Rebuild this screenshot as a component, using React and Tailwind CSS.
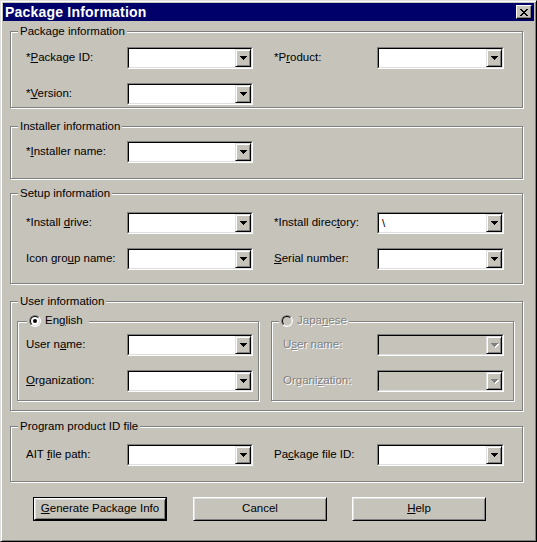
// Win95-style "Package Information" dialog.

const ARROW = 'M0 0h7v1H0z M1 1h5v1H1z M2 2h3v1H2z M3 3h1v1H3z'
const CROSS =
  'M0 0h2v1H0z M6 0h2v1H6z M1 1h2v1H1z M5 1h2v1H5z M2 2h4v1H2z M3 3h2v1H3z M2 4h4v1H2z M1 5h2v1H1z M5 5h2v1H5z M0 6h2v1H0z M6 6h2v1H6z'

function Combo({ w, value, disabled }) {
  return (
    <div className={`${w} h-[22px] border border-t-[#808080] border-l-[#808080] border-b-white border-r-white`}>
      <div
        className={`flex h-full border border-t-black border-l-black border-b-[#dfdfdf] border-r-[#dfdfdf] ${
          disabled ? 'bg-[#c6c3bb]' : 'bg-white'
        }`}
      >
        <div className="flex-1 pl-[3px] leading-[18px]">{value}</div>
        <div className="flex h-full w-[16px] items-center justify-center border border-t-[#dfdfdf] border-l-[#dfdfdf] border-b-black border-r-black bg-[#c6c3bb] shadow-[inset_1px_1px_0_#fff,inset_-1px_-1px_0_#808080]">
          <svg width="7" height="4" shapeRendering="crispEdges" className="overflow-visible">
            {disabled && <path d={ARROW} fill="#fff" transform="translate(1 1)" />}
            <path d={ARROW} fill={disabled ? '#808080' : '#000'} />
          </svg>
        </div>
      </div>
    </div>
  )
}

function Row({ className, children }) {
  return <div className={`flex h-[22px] items-center ${className}`}>{children}</div>
}

function Group({ title, className, children }) {
  return (
    <div className={`w-[513px] border border-[#808080] shadow-[inset_1px_1px_0_#fff,1px_1px_0_#fff] ${className}`}>
      <div className="-mt-[8px] ml-[7px] h-[14px] w-fit bg-[#c6c3bb] px-[2px] leading-[14px]">{title}</div>
      {children}
    </div>
  )
}

function Radio({ checked, disabled }) {
  return (
    <div className="h-[12px] w-[12px] rounded-full border border-t-[#808080] border-l-[#808080] border-b-white border-r-white">
      <div
        className={`flex h-full w-full items-center justify-center rounded-full border border-t-black border-l-black border-b-[#dfdfdf] border-r-[#dfdfdf] ${
          disabled ? 'bg-[#c6c3bb]' : 'bg-white'
        }`}
      >
        {checked && <div className="h-[4px] w-[4px] rounded-full bg-black" />}
      </div>
    </div>
  )
}

function Btn({ children, isDefault, className }) {
  const face = (
    <div className="flex h-full items-center justify-center border border-t-white border-l-white border-b-black border-r-black shadow-[inset_1px_1px_0_#dfdfdf,inset_-1px_-1px_0_#808080]">
      {children}
    </div>
  )
  return (
    <div className={`h-[24px] w-[134px] ${isDefault ? 'border border-black' : ''} ${className}`}>{face}</div>
  )
}

export default function App() {
  const dim = 'text-[#808080] [text-shadow:1px_1px_0_#fff]'
  return (
    <div className="h-[542px] w-[537px] border border-t-[#dfdfdf] border-l-[#dfdfdf] border-b-black border-r-black bg-[#c6c3bb] p-[2px] font-['Liberation_Sans',Arial,sans-serif] text-[11.5px] text-black shadow-[inset_1px_1px_0_#fff,inset_-1px_-1px_0_#808080]">
      {/* Title bar */}
      <div className="flex h-[18px] items-center justify-between bg-[#00006a] px-[2px]">
        <span className="text-[14px] font-bold leading-none tracking-[0.2px] text-white">Package Information</span>
        <div className="flex h-[14px] w-[16px] items-center justify-center border border-t-white border-l-white border-b-black border-r-black bg-[#c6c3bb] shadow-[inset_-1px_-1px_0_#808080]">
          <svg width="8" height="7" shapeRendering="crispEdges">
            <path d={CROSS} fill="#000" />
          </svg>
        </div>
      </div>

      <div className="pl-[7px]">
        <Group title="Package information" className="mt-[10px] h-[77px]">
          <Row className="mt-[9px] pl-[15px]">
            <div className="w-[101px]">*<u>P</u>ackage ID:</div>
            <Combo w="w-[126px]" />
            <div className="ml-[21px] w-[103px]">*P<u>r</u>oduct:</div>
            <Combo w="w-[127px]" />
          </Row>
          <Row className="mt-[14px] pl-[15px]">
            <div className="w-[101px]">*<u>V</u>ersion:</div>
            <Combo w="w-[126px]" />
          </Row>
        </Group>

        <Group title="Installer information" className="mt-[18px] h-[53px]">
          <Row className="mt-[8px] pl-[15px]">
            <div className="w-[101px]">*<u>I</u>nstaller name:</div>
            <Combo w="w-[126px]" />
          </Row>
        </Group>

        <Group title="Setup information" className="mt-[14px] h-[91px]">
          <Row className="mt-[12px] pl-[15px]">
            <div className="w-[101px]">*Install <u>d</u>rive:</div>
            <Combo w="w-[126px]" />
            <div className="ml-[21px] w-[103px]">*Install direc<u>t</u>ory:</div>
            <Combo w="w-[127px]" value={'\\'} />
          </Row>
          <Row className="mt-[14px] pl-[15px]">
            <div className="w-[101px]">Icon gro<u>u</u>p name:</div>
            <Combo w="w-[126px]" />
            <div className="ml-[21px] w-[103px]"><u>S</u>erial number:</div>
            <Combo w="w-[127px]" />
          </Row>
        </Group>

        <Group title="User information" className="mt-[17px] h-[110px]">
          <div className="mt-[13px] flex gap-[12px] pl-[6px]">
            <div className="h-[80px] w-[242px] border border-[#808080] shadow-[inset_1px_1px_0_#fff,1px_1px_0_#fff]">
              <div className="-mt-[8px] ml-[9px] flex h-[14px] w-fit items-center gap-[4px] bg-[#c6c3bb] px-[2px] pr-[6px]">
                <Radio checked />
                <span>En<u>g</u>lish</span>
              </div>
              <Row className="mt-[6px] pl-[8px]">
                <div className="w-[101px]">User n<u>a</u>me:</div>
                <Combo w="w-[126px]" />
              </Row>
              <Row className="mt-[14px] pl-[8px]">
                <div className="w-[101px]"><u>O</u>rganization:</div>
                <Combo w="w-[126px]" />
              </Row>
            </div>
            <div className="h-[80px] w-[243px] border border-[#808080] shadow-[inset_1px_1px_0_#fff,1px_1px_0_#fff]">
              <div className="-mt-[8px] ml-[7px] flex h-[14px] w-fit items-center gap-[4px] bg-[#c6c3bb] px-[2px]">
                <Radio disabled />
                <span className={dim}>Japa<u>n</u>ese</span>
              </div>
              <Row className="mt-[6px] pl-[11px]">
                <div className={`w-[94px] ${dim}`}>U<u>s</u>er name:</div>
                <Combo w="w-[127px]" disabled />
              </Row>
              <Row className="mt-[14px] pl-[11px]">
                <div className={`w-[94px] ${dim}`}>Organi<u>z</u>ation:</div>
                <Combo w="w-[127px]" disabled />
              </Row>
            </div>
          </div>
        </Group>

        <Group title="Program product ID file" className="mt-[15px] h-[56px]">
          <Row className="mt-[11px] pl-[15px]">
            <div className="w-[101px]">AIT <u>f</u>ile path:</div>
            <Combo w="w-[126px]" />
            <div className="ml-[21px] w-[103px]">Pa<u>c</u>kage file ID:</div>
            <Combo w="w-[127px]" />
          </Row>
        </Group>
      </div>

      <div className="mt-[15px] flex pl-[30px]">
        <Btn isDefault>
          <span><u>G</u>enerate Package Info</span>
        </Btn>
        <Btn className="ml-[26px]">Cancel</Btn>
        <Btn className="ml-[25px]">
          <span><u>H</u>elp</span>
        </Btn>
      </div>
    </div>
  )
}
